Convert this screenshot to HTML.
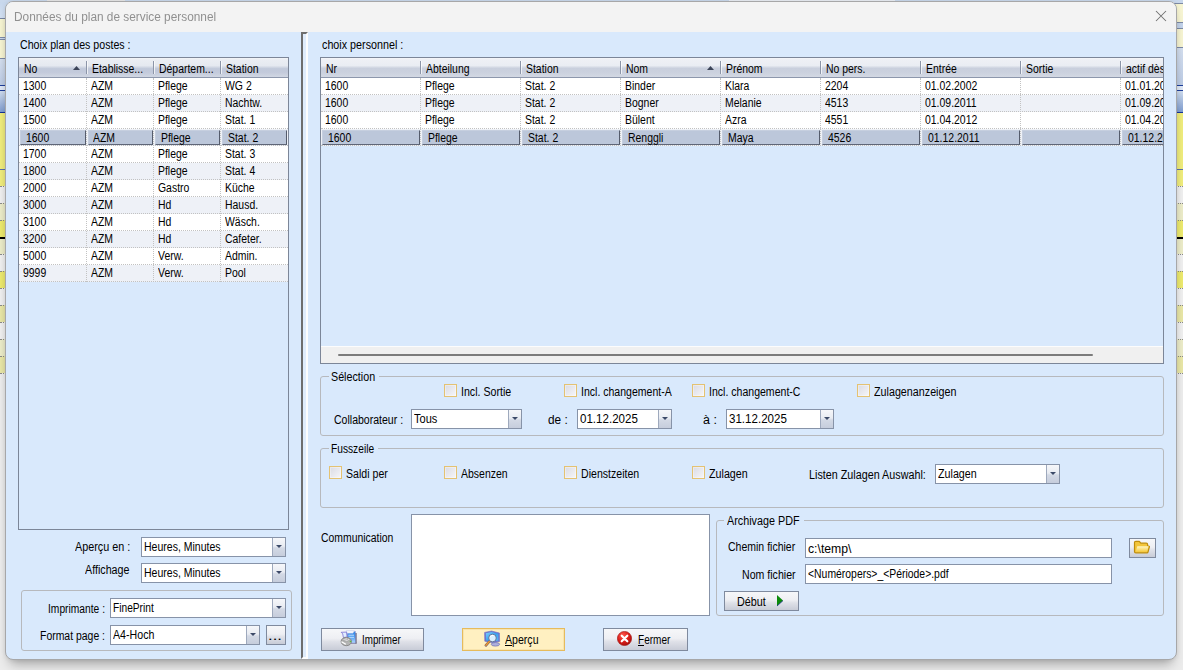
<!DOCTYPE html><html><head><meta charset="utf-8"><title>Données du plan de service personnel</title><style>
html,body{margin:0;padding:0}
body{width:1183px;height:670px;position:relative;overflow:hidden;background:#ececec;font-family:"Liberation Sans",sans-serif;font-size:11.5px;color:#000}
div,span{position:absolute;box-sizing:border-box}
.t{white-space:nowrap;line-height:16px;height:16px;transform-origin:0 50%;transform:scale(0.908,1.08);color:#000}
.dlg{left:5px;top:1px;width:1172px;height:659px;border:1px solid #a7a7a8;border-radius:8px;background:#d9e9fc;overflow:hidden;box-shadow:0 9px 12px -5px rgba(0,0,0,.30),0 0 5px rgba(0,0,0,.09)}
.tb{left:0;top:0;width:1170px;height:30px;background:#f3f3f3}
.grid{background:#d9e9fc;border:1px solid #7c8698;overflow:hidden}
.hdr{left:0;top:0;height:20px;background:linear-gradient(#f3f5f8 0%,#eaedf3 10%,#e5e9f0 40%,#c1c9da 56%,#c3cadb 75%,#d1d7e3 100%);border-bottom:1px solid #8d97ac}
.hdr2{left:0;top:0;height:20px;background:linear-gradient(#f5f6f9 0%,#eef0f5 10%,#eaedf3 40%,#c9cfdd 54%,#cbd1de 75%,#d3d8e3 100%);border-bottom:1px solid #8d97ac}
.hs{width:1px;top:3px;height:13px;background:#8c95a8;box-shadow:1px 0 0 rgba(255,255,255,.7)}
.row{left:0;height:17px;border-bottom:1px dotted #c2c2c2}
.alt{background:#eef1f7}
.wh{background:#fff}
.vs{top:20px;width:0;border-left:1px dotted #c2c2c2}
.sel{background:#bcc7da;border-top:1px solid #c6cfdf;border-left:1px solid #c6cfdf;border-right:1px solid #555c6c;border-bottom:1px solid #5f6677;height:15px}
.gb{border:1px solid #b7b9bd;border-radius:3px}
.gl{background:#d9e9fc;height:14px}
.cb{width:13px;height:13px;border:1px solid #e4c272;background:linear-gradient(135deg,#dadbe3,#f6f6f9);box-shadow:inset 0 0 0 1px rgba(255,255,255,.35)}
.combo{background:#fff;border:1px solid #8793a8}
.dd{top:0;right:0;width:13px;bottom:0;background:linear-gradient(#f6f7fa 0%,#e9ecf2 45%,#d3d9e5 55%,#c6cddc 100%);border-left:1px solid #9ea9bd}
.dd:after{content:"";position:absolute;left:3px;top:7px;border-left:3px solid transparent;border-right:3px solid transparent;border-top:3.2px solid #3c4a68}
.inp{background:#fff;border:1px solid #8793a8}
.btn{border:1px solid #7f8a9e;background:linear-gradient(#f6f7f9 0%,#eeeff3 45%,#dfe1e8 60%,#c8ccd7 100%)}
.btny{border:1px solid #e6bb5c;background:#fff0c1;box-shadow:inset 0 0 0 1px #f8e4ad}
</style></head><body>
<div style="left:0px;top:0;width:8px;height:670px"><div style="left:0;top:0px;width:8px;height:18px;background:linear-gradient(#c6d6ec,#d2dff1)"></div><div style="left:0;top:18px;width:8px;height:1px;background:#76839f"></div><div style="left:0;top:19px;width:8px;height:18px;background:#f6f4d2"></div><div style="left:0;top:37px;width:8px;height:1px;background:#7d8aa8"></div><div style="left:0;top:38px;width:8px;height:1px;background:#c9d8ec"></div><div style="left:0;top:39px;width:8px;height:1px;background:#7d8aa8"></div><div style="left:0;top:40px;width:8px;height:18px;background:#f6f4d2"></div><div style="left:0;top:58px;width:8px;height:1px;background:#7a88a6"></div><div style="left:0;top:59px;width:8px;height:26px;background:linear-gradient(#d3deee,#bccbe4)"></div><div style="left:0;top:85px;width:8px;height:1px;background:#1f3f9a"></div><div style="left:0;top:86px;width:8px;height:4px;background:#dfe8f6"></div><div style="left:0;top:90px;width:8px;height:1px;background:#1f3f9a"></div><div style="left:0;top:91px;width:8px;height:21px;background:linear-gradient(#cfdcee,#7f9dcf)"></div><div style="left:0;top:112px;width:8px;height:1px;background:#16349a"></div><div style="left:0;top:113px;width:8px;height:56px;background:#efec7c"></div><div style="left:0;top:169px;width:8px;height:1px;background:#5a70a8"></div><div style="left:0;top:170px;width:8px;height:16px;background:#efec7c"></div><div style="left:0;top:186px;width:8px;height:17px;background:#efefef"></div><div style="left:0;top:203px;width:8px;height:17px;background:#ebebc8"></div><div style="left:0;top:220px;width:8px;height:17px;background:#ece96e"></div><div style="left:0;top:237px;width:8px;height:2px;background:#000"></div><div style="left:0;top:239px;width:8px;height:15px;background:#ebebc8"></div><div style="left:0;top:254px;width:8px;height:17px;background:#efefef"></div><div style="left:0;top:271px;width:8px;height:17px;background:#ece96e"></div><div style="left:0;top:288px;width:8px;height:17px;background:#efefef"></div><div style="left:0;top:305px;width:8px;height:17px;background:#e8e6a6"></div><div style="left:0;top:322px;width:8px;height:17px;background:#efefef"></div><div style="left:0;top:339px;width:8px;height:17px;background:#ebebc8"></div><div style="left:0;top:356px;width:8px;height:17px;background:#e8e6a6"></div><div style="left:0;top:373px;width:8px;height:297px;background:#ececec"></div><div style="left:0;top:186px;width:8px;height:0;border-top:1px dotted #8a8a8a"></div><div style="left:0;top:203px;width:8px;height:0;border-top:1px dotted #8a8a8a"></div><div style="left:0;top:220px;width:8px;height:0;border-top:1px dotted #8a8a8a"></div><div style="left:0;top:254px;width:8px;height:0;border-top:1px dotted #8a8a8a"></div><div style="left:0;top:271px;width:8px;height:0;border-top:1px dotted #8a8a8a"></div><div style="left:0;top:288px;width:8px;height:0;border-top:1px dotted #8a8a8a"></div><div style="left:0;top:305px;width:8px;height:0;border-top:1px dotted #8a8a8a"></div><div style="left:0;top:322px;width:8px;height:0;border-top:1px dotted #8a8a8a"></div><div style="left:0;top:339px;width:8px;height:0;border-top:1px dotted #8a8a8a"></div><div style="left:0;top:356px;width:8px;height:0;border-top:1px dotted #8a8a8a"></div><div style="left:0;top:373px;width:8px;height:0;border-top:1px dotted #8a8a8a"></div></div>
<div style="left:1174px;top:0;width:9px;height:670px"><div style="left:0;top:0px;width:9px;height:3px;background:#c9d8ec"></div><div style="left:0;top:3px;width:9px;height:1px;background:#7d8aa5"></div><div style="left:0;top:4px;width:9px;height:18px;background:#f6f4d2"></div><div style="left:0;top:22px;width:9px;height:1px;background:#7d8aa5"></div><div style="left:0;top:23px;width:9px;height:5px;background:#c3d3ea"></div><div style="left:0;top:28px;width:9px;height:1px;background:#7d8aa5"></div><div style="left:0;top:29px;width:9px;height:18px;background:#f6f4d2"></div><div style="left:0;top:47px;width:9px;height:1px;background:#7a88a6"></div><div style="left:0;top:48px;width:9px;height:37px;background:linear-gradient(#d3deee,#bccbe4)"></div><div style="left:0;top:85px;width:9px;height:1px;background:#1f3f9a"></div><div style="left:0;top:86px;width:9px;height:4px;background:#dfe8f6"></div><div style="left:0;top:90px;width:9px;height:1px;background:#1f3f9a"></div><div style="left:0;top:91px;width:9px;height:21px;background:linear-gradient(#cfdcee,#7f9dcf)"></div><div style="left:0;top:112px;width:9px;height:1px;background:#16349a"></div><div style="left:0;top:113px;width:9px;height:56px;background:#efec7c"></div><div style="left:0;top:169px;width:9px;height:1px;background:#5a70a8"></div><div style="left:0;top:170px;width:9px;height:16px;background:#efec7c"></div><div style="left:0;top:186px;width:9px;height:17px;background:#efefef"></div><div style="left:0;top:203px;width:9px;height:17px;background:#ebebc8"></div><div style="left:0;top:220px;width:9px;height:17px;background:#ece96e"></div><div style="left:0;top:237px;width:9px;height:2px;background:#000"></div><div style="left:0;top:239px;width:9px;height:15px;background:#ebebc8"></div><div style="left:0;top:254px;width:9px;height:17px;background:#efefef"></div><div style="left:0;top:271px;width:9px;height:17px;background:#ece96e"></div><div style="left:0;top:288px;width:9px;height:17px;background:#efefef"></div><div style="left:0;top:305px;width:9px;height:17px;background:#e8e6a6"></div><div style="left:0;top:322px;width:9px;height:17px;background:#efefef"></div><div style="left:0;top:339px;width:9px;height:17px;background:#ebebc8"></div><div style="left:0;top:356px;width:9px;height:17px;background:#e8e6a6"></div><div style="left:0;top:373px;width:9px;height:297px;background:#ececec"></div><div style="left:0;top:186px;width:9px;height:0;border-top:1px dotted #8a8a8a"></div><div style="left:0;top:203px;width:9px;height:0;border-top:1px dotted #8a8a8a"></div><div style="left:0;top:220px;width:9px;height:0;border-top:1px dotted #8a8a8a"></div><div style="left:0;top:254px;width:9px;height:0;border-top:1px dotted #8a8a8a"></div><div style="left:0;top:271px;width:9px;height:0;border-top:1px dotted #8a8a8a"></div><div style="left:0;top:288px;width:9px;height:0;border-top:1px dotted #8a8a8a"></div><div style="left:0;top:305px;width:9px;height:0;border-top:1px dotted #8a8a8a"></div><div style="left:0;top:322px;width:9px;height:0;border-top:1px dotted #8a8a8a"></div><div style="left:0;top:339px;width:9px;height:0;border-top:1px dotted #8a8a8a"></div><div style="left:0;top:356px;width:9px;height:0;border-top:1px dotted #8a8a8a"></div><div style="left:0;top:373px;width:9px;height:0;border-top:1px dotted #8a8a8a"></div></div>
<div style="left:0;top:0;width:1183px;height:2px;background:#c9d8ec"></div>
<div style="left:47px;top:0;width:78px;height:1px;background:#e6e6e6"></div>
<div style="left:729px;top:0;width:166px;height:1px;background:#e9edf3"></div>
<div class="dlg"><div class="tb"></div></div>
<span class="t" style="left:14px;top:9px;transform:scaleX(.987);color:#8f8f8f;font-size:12px;will-change:opacity;opacity:.99">Données du plan de service personnel</span>
<svg style="position:absolute;left:1155px;top:10px" width="12" height="12" viewBox="0 0 12 12"><path d="M1 1 L11 11 M11 1 L1 11" stroke="#707070" stroke-width="1.05" fill="none"/></svg>
<span class="t" style="left:19.67px;top:37px;transform:scale(0.925,1.08);">Choix plan des postes :</span>
<div class="grid" style="left:18px;top:57px;width:271px;height:473px"><div class="hdr" style="width:269px"></div><div class="hs" style="left:67px"></div><div class="hs" style="left:134px"></div><div class="hs" style="left:201px"></div><div class="row wh" style="top:20px;width:269px"></div><div class="row alt" style="top:37px;width:269px"></div><div class="row wh" style="top:54px;width:269px"></div><div class="row alt" style="top:71px;width:269px"></div><div class="row wh" style="top:88px;width:269px"></div><div class="row alt" style="top:105px;width:269px"></div><div class="row wh" style="top:122px;width:269px"></div><div class="row alt" style="top:139px;width:269px"></div><div class="row wh" style="top:156px;width:269px"></div><div class="row alt" style="top:173px;width:269px"></div><div class="row wh" style="top:190px;width:269px"></div><div class="row alt" style="top:207px;width:269px"></div><div class="vs" style="left:67px;height:204px"></div><div class="vs" style="left:134px;height:204px"></div><div class="vs" style="left:201px;height:204px"></div><div class="sel" style="left:1px;top:72px;width:66px"></div><div class="sel" style="left:69px;top:72px;width:65px"></div><div class="sel" style="left:136px;top:72px;width:65px"></div><div class="sel" style="left:203px;top:72px;width:65px"></div></div>
<span class="t" style="left:24px;top:60.5px;">No</span>
<span class="t" style="left:91.5px;top:60.5px;">Etablisse...</span>
<span class="t" style="left:159px;top:60.5px;">Départem...</span>
<span class="t" style="left:226px;top:60.5px;">Station</span>
<svg style="position:absolute;left:73px;top:66px" width="7" height="4" viewBox="0 0 7 4"><path d="M0 4 L3.5 0 L7 4Z" fill="#3c4458"/></svg>
<span class="t" style="left:23.2px;top:77.6px;">1300</span>
<span class="t" style="left:90.5px;top:77.6px;">AZM</span>
<span class="t" style="left:158px;top:77.6px;">Pflege</span>
<span class="t" style="left:225px;top:77.6px;">WG 2</span>
<span class="t" style="left:23.2px;top:94.6px;">1400</span>
<span class="t" style="left:90.5px;top:94.6px;">AZM</span>
<span class="t" style="left:158px;top:94.6px;">Pflege</span>
<span class="t" style="left:225px;top:94.6px;">Nachtw.</span>
<span class="t" style="left:23.2px;top:111.6px;">1500</span>
<span class="t" style="left:90.5px;top:111.6px;">AZM</span>
<span class="t" style="left:158px;top:111.6px;">Pflege</span>
<span class="t" style="left:225px;top:111.6px;">Stat. 1</span>
<span class="t" style="left:25.7px;top:129.5px;">1600</span>
<span class="t" style="left:93px;top:129.5px;">AZM</span>
<span class="t" style="left:160.5px;top:129.5px;">Pflege</span>
<span class="t" style="left:227.5px;top:129.5px;">Stat. 2</span>
<span class="t" style="left:23.2px;top:145.6px;">1700</span>
<span class="t" style="left:90.5px;top:145.6px;">AZM</span>
<span class="t" style="left:158px;top:145.6px;">Pflege</span>
<span class="t" style="left:225px;top:145.6px;">Stat. 3</span>
<span class="t" style="left:23.2px;top:162.6px;">1800</span>
<span class="t" style="left:90.5px;top:162.6px;">AZM</span>
<span class="t" style="left:158px;top:162.6px;">Pflege</span>
<span class="t" style="left:225px;top:162.6px;">Stat. 4</span>
<span class="t" style="left:23.2px;top:179.6px;">2000</span>
<span class="t" style="left:90.5px;top:179.6px;">AZM</span>
<span class="t" style="left:158px;top:179.6px;">Gastro</span>
<span class="t" style="left:225px;top:179.6px;">Küche</span>
<span class="t" style="left:23.2px;top:196.6px;">3000</span>
<span class="t" style="left:90.5px;top:196.6px;">AZM</span>
<span class="t" style="left:158px;top:196.6px;">Hd</span>
<span class="t" style="left:225px;top:196.6px;">Hausd.</span>
<span class="t" style="left:23.2px;top:213.6px;">3100</span>
<span class="t" style="left:90.5px;top:213.6px;">AZM</span>
<span class="t" style="left:158px;top:213.6px;">Hd</span>
<span class="t" style="left:225px;top:213.6px;">Wäsch.</span>
<span class="t" style="left:23.2px;top:230.6px;">3200</span>
<span class="t" style="left:90.5px;top:230.6px;">AZM</span>
<span class="t" style="left:158px;top:230.6px;">Hd</span>
<span class="t" style="left:225px;top:230.6px;">Cafeter.</span>
<span class="t" style="left:23.2px;top:247.6px;">5000</span>
<span class="t" style="left:90.5px;top:247.6px;">AZM</span>
<span class="t" style="left:158px;top:247.6px;">Verw.</span>
<span class="t" style="left:225px;top:247.6px;">Admin.</span>
<span class="t" style="left:23.2px;top:264.6px;">9999</span>
<span class="t" style="left:90.5px;top:264.6px;">AZM</span>
<span class="t" style="left:158px;top:264.6px;">Verw.</span>
<span class="t" style="left:225px;top:264.6px;">Pool</span>
<span class="t" style="left:75.4px;top:539.2px;transform:scale(0.941,1.08);">Aperçu en :</span>
<div class="combo" style="left:141px;top:537px;width:145px;height:20px"><div class="dd"></div></div>
<span class="t" style="left:144.02px;top:538.7px;transform:scale(0.915,1.08);">Heures, Minutes</span>
<span class="t" style="left:85px;top:561.5px;transform:scale(0.931,1.08);">Affichage</span>
<div class="combo" style="left:141px;top:563px;width:145px;height:20px"><div class="dd"></div></div>
<span class="t" style="left:144.02px;top:564.7px;transform:scale(0.915,1.08);">Heures, Minutes</span>
<div class="gb" style="left:21px;top:590px;width:271px;height:61px;"></div>
<span class="t" style="left:47.66px;top:601.3px;transform:scale(0.892,1.08);">Imprimante :</span>
<div class="combo" style="left:110px;top:598px;width:176px;height:20px"><div class="dd"></div></div>
<span class="t" style="left:112.65px;top:599.7px;transform:scale(0.886,1.08);">FinePrint</span>
<span class="t" style="left:39.73px;top:628px;">Format page :</span>
<div class="combo" style="left:110px;top:625px;width:150px;height:20px"><div class="dd"></div></div>
<span class="t" style="left:113.1px;top:626.7px;transform:scale(0.925,1.08);">A4-Hoch</span>
<div class="btn" style="left:266px;top:625px;width:20px;height:20px;"></div>
<span class="t" style="left:268.47px;top:627.6px;transform:scale(1.453,1.08);">...</span>
<div style="left:301px;top:32px;width:7px;height:627px;border-left:2px solid #6e6e6e;border-top:2px solid #6e6e6e;border-right:2px solid #fdfdfd;border-bottom:2px solid #fdfdfd;background:#dfecfc"></div>
<span class="t" style="left:322.35px;top:36.6px;transform:scale(0.935,1.08);">choix personnel :</span>
<div class="grid" style="left:320px;top:57px;width:844px;height:307px"><div class="hdr2" style="width:842px"></div><div class="hs" style="left:99px"></div><div class="hs" style="left:199px"></div><div class="hs" style="left:299px"></div><div class="hs" style="left:399px"></div><div class="hs" style="left:499px"></div><div class="hs" style="left:599px"></div><div class="hs" style="left:699px"></div><div class="hs" style="left:799px"></div><div class="row wh" style="top:20px;width:842px"></div><div class="row alt" style="top:37px;width:842px"></div><div class="row wh" style="top:54px;width:842px"></div><div class="row alt" style="top:71px;width:842px"></div><div class="vs" style="left:99px;height:68px"></div><div class="vs" style="left:199px;height:68px"></div><div class="vs" style="left:299px;height:68px"></div><div class="vs" style="left:399px;height:68px"></div><div class="vs" style="left:499px;height:68px"></div><div class="vs" style="left:599px;height:68px"></div><div class="vs" style="left:699px;height:68px"></div><div class="vs" style="left:799px;height:68px"></div><div class="sel" style="left:1px;top:72px;width:98px"></div><div class="sel" style="left:101px;top:72px;width:98px"></div><div class="sel" style="left:201px;top:72px;width:98px"></div><div class="sel" style="left:301px;top:72px;width:98px"></div><div class="sel" style="left:401px;top:72px;width:98px"></div><div class="sel" style="left:501px;top:72px;width:98px"></div><div class="sel" style="left:601px;top:72px;width:98px"></div><div class="sel" style="left:701px;top:72px;width:98px"></div><div class="sel" style="left:801px;top:72px;width:48px"></div><div style="left:0;top:288px;width:842px;height:17px;background:#f0f0f0;border-top:1px solid #fcfcfc"></div><div style="left:17px;top:296px;width:755px;height:2px;background:#7c7c7c;border-radius:1px"></div><span class="t" style="left:5px;top:2.5px;">Nr</span><span class="t" style="left:105px;top:2.5px;">Abteilung</span><span class="t" style="left:205px;top:2.5px;">Station</span><span class="t" style="left:305px;top:2.5px;">Nom</span><span class="t" style="left:405px;top:2.5px;">Prénom</span><span class="t" style="left:505px;top:2.5px;">No pers.</span><span class="t" style="left:605px;top:2.5px;">Entrée</span><span class="t" style="left:705px;top:2.5px;">Sortie</span><span class="t" style="left:805px;top:2.5px;">actif dès</span><span class="t" style="left:4.2px;top:19.6px;">1600</span><span class="t" style="left:104.2px;top:19.6px;">Pflege</span><span class="t" style="left:204.2px;top:19.6px;">Stat. 2</span><span class="t" style="left:304.2px;top:19.6px;">Binder</span><span class="t" style="left:404.2px;top:19.6px;">Klara</span><span class="t" style="left:504.2px;top:19.6px;">2204</span><span class="t" style="left:604.2px;top:19.6px;">01.02.2002</span><span class="t" style="left:804.2px;top:19.6px;">01.01.2002</span><span class="t" style="left:4.2px;top:36.6px;">1600</span><span class="t" style="left:104.2px;top:36.6px;">Pflege</span><span class="t" style="left:204.2px;top:36.6px;">Stat. 2</span><span class="t" style="left:304.2px;top:36.6px;">Bogner</span><span class="t" style="left:404.2px;top:36.6px;">Melanie</span><span class="t" style="left:504.2px;top:36.6px;">4513</span><span class="t" style="left:604.2px;top:36.6px;">01.09.2011</span><span class="t" style="left:804.2px;top:36.6px;">01.09.2011</span><span class="t" style="left:4.2px;top:53.6px;">1600</span><span class="t" style="left:104.2px;top:53.6px;">Pflege</span><span class="t" style="left:204.2px;top:53.6px;">Stat. 2</span><span class="t" style="left:304.2px;top:53.6px;">Bülent</span><span class="t" style="left:404.2px;top:53.6px;">Azra</span><span class="t" style="left:504.2px;top:53.6px;">4551</span><span class="t" style="left:604.2px;top:53.6px;">01.04.2012</span><span class="t" style="left:804.2px;top:53.6px;">01.04.2012</span><span class="t" style="left:6.7px;top:71.5px;">1600</span><span class="t" style="left:106.7px;top:71.5px;">Pflege</span><span class="t" style="left:206.7px;top:71.5px;">Stat. 2</span><span class="t" style="left:306.7px;top:71.5px;">Renggli</span><span class="t" style="left:406.7px;top:71.5px;">Maya</span><span class="t" style="left:506.7px;top:71.5px;">4526</span><span class="t" style="left:606.7px;top:71.5px;">01.12.2011</span><span class="t" style="left:806.7px;top:71.5px;">01.12.2011</span><svg style="position:absolute;left:386px;top:8px" width="7" height="4" viewBox="0 0 7 4"><path d="M0 4 L3.5 0 L7 4Z" fill="#3c4458"/></svg></div>
<div class="gb" style="left:320px;top:376px;width:844px;height:60px;"></div>
<div class="gl" style="left:329px;top:370px;width:50px;height:14px;"></div>
<span class="t" style="left:331.25px;top:368.8px;transform:scale(0.933,1.08);">Sélection</span>
<div class="cb" style="left:444px;top:384px;width:13px;height:13px;"></div>
<span class="t" style="left:460.53px;top:383.5px;transform:scale(0.924,1.08);">Incl. Sortie</span>
<div class="cb" style="left:564px;top:384px;width:13px;height:13px;"></div>
<span class="t" style="left:580.63px;top:383.5px;transform:scale(0.916,1.08);">Incl. changement-A</span>
<div class="cb" style="left:692px;top:384px;width:13px;height:13px;"></div>
<span class="t" style="left:708.83px;top:383.5px;transform:scale(0.917,1.08);">Incl. changement-C</span>
<div class="cb" style="left:857px;top:384px;width:13px;height:13px;"></div>
<span class="t" style="left:873.64px;top:383.5px;transform:scale(0.934,1.08);">Zulagenanzeigen</span>
<span class="t" style="left:334.17px;top:411.6px;transform:scale(0.916,1.08);">Collaborateur :</span>
<div class="combo" style="left:411px;top:409px;width:111px;height:20px"><div class="dd"></div></div>
<span class="t" style="left:414.42px;top:410.7px;transform:scale(0.963,1.08);">Tous</span>
<span class="t" style="left:548.01px;top:411.7px;transform:scale(1.027,1.08);">de :</span>
<div class="combo" style="left:577px;top:409px;width:95px;height:20px"><div class="dd"></div></div>
<span class="t" style="left:579.61px;top:410.7px;transform:scale(1.006,1.08);">01.12.2025</span>
<span class="t" style="left:703.18px;top:411.7px;transform:scale(1.088,1.08);">à :</span>
<div class="combo" style="left:726px;top:409px;width:108px;height:20px"><div class="dd"></div></div>
<span class="t" style="left:729.11px;top:410.7px;transform:scale(1.006,1.08);">31.12.2025</span>
<div class="gb" style="left:320px;top:448px;width:844px;height:60px;"></div>
<div class="gl" style="left:329px;top:442px;width:49px;height:14px;"></div>
<span class="t" style="left:330.85px;top:440.8px;transform:scale(0.887,1.08);">Fusszeile</span>
<div class="cb" style="left:329px;top:466px;width:13px;height:13px;"></div>
<span class="t" style="left:345.56px;top:465.5px;transform:scale(0.921,1.08);">Saldi per</span>
<div class="cb" style="left:444px;top:466px;width:13px;height:13px;"></div>
<span class="t" style="left:461.4px;top:465.5px;transform:scale(0.913,1.08);">Absenzen</span>
<div class="cb" style="left:564px;top:466px;width:13px;height:13px;"></div>
<span class="t" style="left:580.72px;top:465.5px;transform:scale(0.920,1.08);">Dienstzeiten</span>
<div class="cb" style="left:692px;top:466px;width:13px;height:13px;"></div>
<span class="t" style="left:708.64px;top:465.5px;transform:scale(0.932,1.08);">Zulagen</span>
<span class="t" style="left:809.4px;top:466.5px;transform:scale(0.937,1.08);">Listen Zulagen Auswahl:</span>
<div class="combo" style="left:935px;top:464px;width:125px;height:20px"><div class="dd"></div></div>
<span class="t" style="left:937.94px;top:465.7px;transform:scale(0.932,1.08);">Zulagen</span>
<span class="t" style="left:321.38px;top:530px;transform:scale(0.905,1.08);">Communication</span>
<div class="inp" style="left:411px;top:514px;width:299px;height:102px;"></div>
<div class="gb" style="left:716px;top:520px;width:448px;height:96px;"></div>
<div class="gl" style="left:724px;top:514px;width:80px;height:14px;"></div>
<span class="t" style="left:727px;top:512.8px;transform:scale(0.938,1.08);">Archivage PDF</span>
<span class="t" style="left:728.07px;top:539px;transform:scale(0.914,1.08);">Chemin fichier</span>
<div class="inp" style="left:805px;top:538px;width:307px;height:20px;"></div>
<span class="t" style="left:807.69px;top:540.5px;transform:scale(1.063,1.08);">c:\temp\</span>
<span class="t" style="left:741.62px;top:567px;transform:scale(0.921,1.08);">Nom fichier</span>
<div class="inp" style="left:805px;top:564px;width:307px;height:20px;"></div>
<span class="t" style="left:807.68px;top:566.3px;transform:scale(0.905,1.08);">&lt;Numéropers&gt;_&lt;Période&gt;.pdf</span>
<div class="btn" style="left:1129px;top:538px;width:27px;height:20px;"></div>
<svg style="position:absolute;left:1133px;top:540px" width="18" height="14" viewBox="0 0 18 14"><defs><linearGradient id="fg" x1="0" y1="0" x2="0" y2="1"><stop offset="0" stop-color="#fff6c4"/><stop offset="1" stop-color="#f6c93a"/></linearGradient></defs><path d="M1.5 11.5 L1.5 2.6 Q1.5 1.3 2.8 1.3 L6.3 1.3 L7.8 3.2 L13.2 3.2 Q14.6 3.2 14.6 4.6 L14.6 6 L15.8 6 Q16.6 6 16.4 6.9 L15 12 Q14.8 12.8 14 12.8 L2.8 12.8 Q1.5 12.8 1.5 11.5Z" fill="#f3c53a" stroke="#bf8d0c" stroke-width="1.2" stroke-linejoin="round"/><path d="M4.3 6.3 L15.5 6.3 L14.1 11.9 L2.6 11.9 Z" fill="url(#fg)"/></svg>
<div class="btn" style="left:724px;top:591px;width:75px;height:20px;"></div>
<span class="t" style="left:737.3px;top:593.5px;transform:scale(0.939,1.08);">Début</span>
<svg style="position:absolute;left:776px;top:594px" width="8" height="13" viewBox="0 0 8 13"><path d="M1 1 L7 6.6 L1 12 Z" fill="#0b8a0b"/><path d="M1 12 L7 6.6" stroke="#1a2a8a" stroke-width=".8"/></svg>
<div class="btn" style="left:321px;top:628px;width:103px;height:23px;"></div>
<span class="t" style="left:362.1px;top:632px;transform:scale(0.853,1.08);">Imprimer</span>
<div class="btny" style="left:462px;top:628px;width:103px;height:23px;"></div>
<span class="t" style="left:505.3px;top:632px;transform:scale(0.920,1.08);">Aperçu</span>
<div style="left:505.3px;top:645px;width:7px;height:1px;background:#000"></div>
<div class="btn" style="left:603px;top:628px;width:85px;height:23px;"></div>
<span class="t" style="left:637.56px;top:632px;transform:scale(0.874,1.08);">Fermer</span>
<div style="left:638.4px;top:645px;width:5.5px;height:1px;background:#000"></div>
<svg style="position:absolute;left:340px;top:630px" width="18" height="17" viewBox="0 0 18 17"><defs><linearGradient id="pd" x1="0" y1="0" x2="0" y2="1"><stop offset="0" stop-color="#2f84e4"/><stop offset=".45" stop-color="#4d9cf0"/><stop offset="1" stop-color="#b4daff"/></linearGradient></defs><rect x="15" y="3" width="1.7" height="10.5" fill="#747488"/><rect x="8" y="12.6" width="8.6" height="1" fill="#747488"/><rect x="7.3" y="1.6" width="8" height="11.4" fill="url(#pd)" stroke="#7f86cc" stroke-width=".5"/><path d="M6.2 .8 L14.4 .8 L13 3.2 L7.2 3.2Z" fill="#fdfeff" stroke="#a9b6e2" stroke-width=".5"/><path d="M8.4 5.2h5.6M8.4 7.3h5.6" stroke="#cfe6ff" stroke-width=".9"/><path d="M1.2 2.3 L6.4 2.1 L7.2 7.2 L3.4 7.5 L2.7 3.8Z" fill="#e2eeff" stroke="#6b5fcf" stroke-width=".7" stroke-linejoin="round"/><ellipse cx="6.3" cy="11.5" rx="5.2" ry="4.2" fill="#b4b4b4" stroke="#7c7c7c" stroke-width=".8"/><path d="M1.8 10 L6 7.9 L10.6 9.6 L6.4 11.6Z" fill="#e9e9e9" stroke="#8e8e8e" stroke-width=".5"/><path d="M1.9 12 L5.4 14" stroke="#ffffff" stroke-width="1.3" stroke-linecap="round"/><path d="M3.5 10.4 L8 9.5" stroke="#9a9a9a" stroke-width=".7"/><circle cx="10.5" cy="11.5" r=".8" fill="#55c23a"/></svg>
<svg style="position:absolute;left:483px;top:630px" width="18" height="17" viewBox="0 0 18 17"><defs><linearGradient id="sc" x1="0" y1="0" x2="1" y2="1"><stop offset="0" stop-color="#7fd0ff"/><stop offset=".5" stop-color="#3aa2f0"/><stop offset="1" stop-color="#58b8f6"/></linearGradient></defs><ellipse cx="12.4" cy="14.3" rx="4.2" ry="1.8" fill="#aeb0dc" stroke="#7476b8" stroke-width=".8"/><path d="M1.6 2.4 L8.5 1 L16.4 3 L16.6 11.4 L9 12.6 L1.8 11.2Z" fill="#6c72cc" stroke="#6a6fc6" stroke-width=".6" stroke-linejoin="round"/><path d="M2.8 3.2 L8.5 2.1 L15.3 3.8 L15.4 10.6 L9 11.5 L3 10.4Z" fill="url(#sc)"/><path d="M6.8 11 L2.9 15.3" stroke="#6a5a6a" stroke-width="2.6" stroke-linecap="round"/><path d="M6.8 11 L2.9 15.3" stroke="#f09a2e" stroke-width="1.5" stroke-linecap="round"/><circle cx="9.5" cy="8" r="3.8" fill="#d9efff" stroke="#5f6d8e" stroke-width=".9"/><path d="M7.2 7.2 A2.6 2.6 0 0 1 10.6 5.6" stroke="#ffffff" stroke-width="1" fill="none"/></svg>
<svg style="position:absolute;left:617px;top:631px" width="15" height="15" viewBox="0 0 15 15"><defs><radialGradient id="rg" cx="38%" cy="28%" r="75%"><stop offset="0" stop-color="#ff5a4e"/><stop offset=".55" stop-color="#dd1f1a"/><stop offset="1" stop-color="#a80d0a"/></radialGradient></defs><circle cx="7.5" cy="7.5" r="7.1" fill="url(#rg)" stroke="#9a0d0a" stroke-width=".6"/><path d="M4.7 4.7 L10.3 10.3 M10.3 4.7 L4.7 10.3" stroke="#fff" stroke-width="2.2" stroke-linecap="round"/></svg>
</body></html>
